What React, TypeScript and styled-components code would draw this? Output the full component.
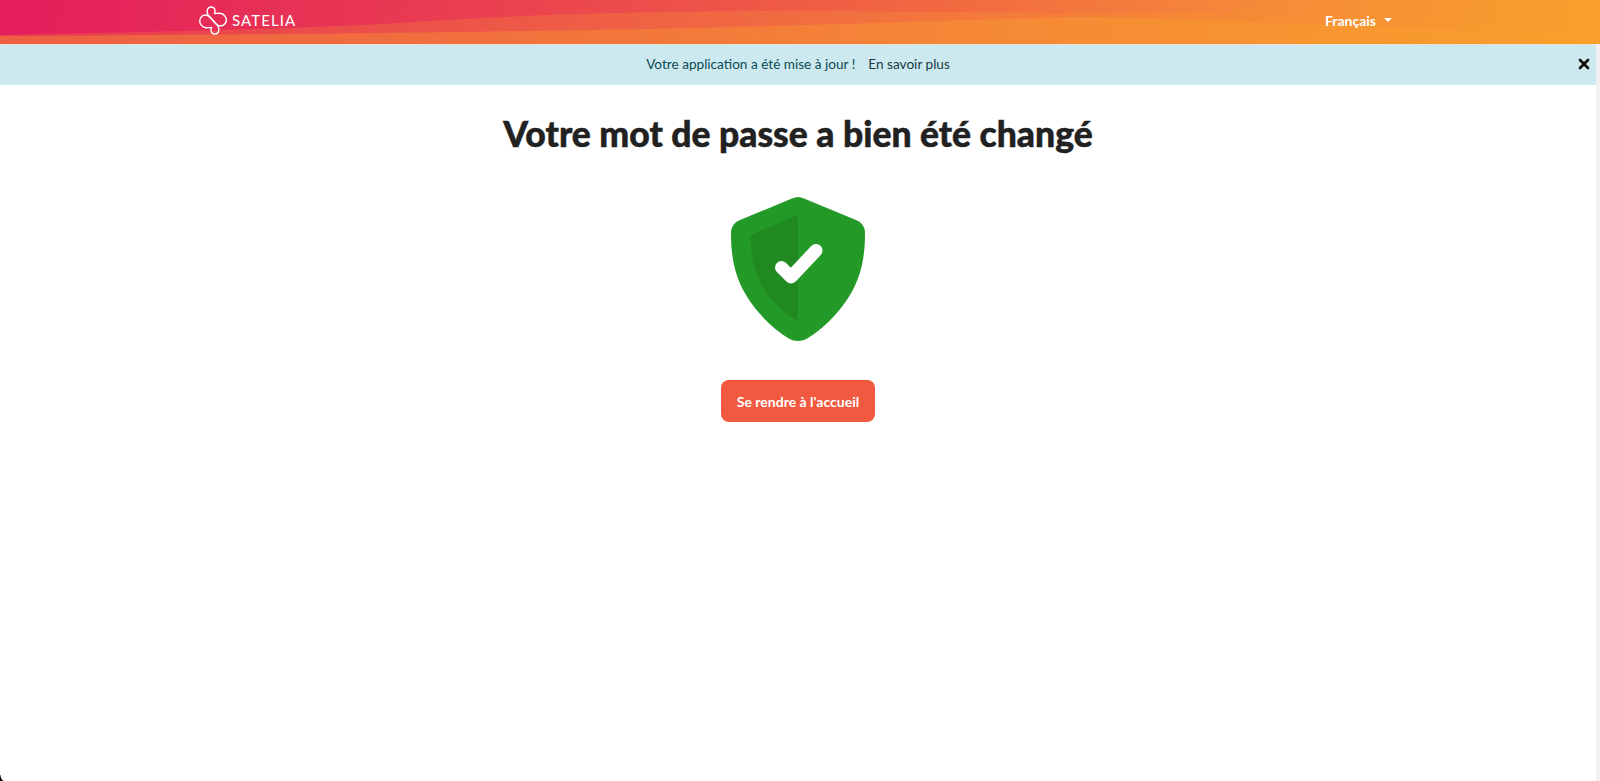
import React from "react";
import styled, {createGlobalStyle} from "styled-components";

const GlobalStyle = createGlobalStyle`
  html, body {
    margin: 0;
    padding: 0;
    height: 100%;
    background: white;
    overflow: hidden;
  }
  #root {
    height: 100%;
  }
`
const Page = styled.div`
  position: relative;
  height: 781px;
  display: flex;
  flex-direction: column;
  font-family: "Lato", "Open Sans", sans-serif;
  border-right: 4px solid #f1f1f1;
  box-sizing: border-box;
`
const Header = styled.header`
  position: relative;
  height: 44px;
  margin-right: -4px;
  flex-shrink: 0;
  display: flex;
  align-items: center;
  justify-content: space-between;
  padding: 0 208px 4px 199px;
  box-sizing: border-box;
  background: linear-gradient(96deg, #e41d5d 0%, #ea3f50 30%, #f26b40 60%, #f68c38 80%, #f9a02c 100%);
  overflow: hidden;
`
const Waves = styled.svg`
  position: absolute;
  inset: 0;
  width: 100%;
  height: 100%;
`
const Brand = styled.div`
  position: relative;
  display: flex;
  align-items: center;
  gap: 5px;
  color: white;
  font-size: 15px;
  letter-spacing: 1.1px;
`
const LangToggle = styled.div`
  position: relative;
  display: flex;
  align-items: center;
  gap: 8px;
  color: white;
  font-size: 14px;
  font-weight: 700;
`
const Caret = styled.span`
  width: 0;
  height: 0;
  border-top: 4px solid white;
  border-left: 4px solid transparent;
  border-right: 4px solid transparent;
`
const Banner = styled.div`
  position: relative;
  height: 41px;
  padding-bottom: 2px;
  box-sizing: border-box;
  border-top: 1px solid #e9e0d6;
  flex-shrink: 0;
  display: flex;
  align-items: center;
  justify-content: center;
  gap: 13px;
  background: #cce9ef;
  font-size: 13.6px;
  color: #0c4a55;
`
const BannerLink = styled.span`
  color: #1b3a44;
`
const Close = styled.span`
  position: absolute;
  right: 6px;
  top: 13px;
  display: flex;
`
const Main = styled.main`
  flex: 1;
  display: flex;
  flex-direction: column;
  align-items: center;
`
const Title = styled.h1`
  margin: 26px 0 0;
  font-size: 35.5px;
  line-height: 46px;
  font-weight: 900;
  color: #212121;
  -webkit-text-stroke: 0.5px #212121;
`
const ShieldIcon = styled.svg`
  display: block;
  margin-top: 40px;
`
const HomeButton = styled.button`
  margin-top: 39px;
  width: 154px;
  height: 42px;
  padding-bottom: 2px;
  border: none;
  border-top: 1px solid #ef4f26;
  border-radius: 8px;
  background: #f15a40;
  color: white;
  font-family: inherit;
  font-size: 14px;
  font-weight: 700;
  cursor: pointer;
`
const WindowCorner = styled.div`
  position: absolute;
  left: 0;
  bottom: 0;
  width: 8px;
  height: 6px;
  background: radial-gradient(circle at 100% 0, transparent 7px, black 8px);
`

const logoPath = "M9 9C7 5 8.500 1 12 1C15.500 1 17 4 15.500 7.500C18 7.500 20 7 22 7.500C25 8 27.300 11 27.300 14C27.300 17.500 24.500 20 21.500 20C19 20 17.500 18.500 16 17Z"

const Logo = () => (
    <svg width="28" height="29" viewBox="0 0 28 29" fill="none" stroke="white" strokeWidth="1.4" strokeLinejoin="round">
        <path d={logoPath}/>
        <path d={logoPath} transform="rotate(180 14 14.500)"/>
    </svg>
)

const App: React.FC = () => {
    return (
        <Page>
            <GlobalStyle/>
            <Header>
                <Waves viewBox="0 0 1600 44" preserveAspectRatio="none">
                    <defs>
                        <linearGradient id="waveA" x1="0" x2="1" y1="0" y2="0">
                            <stop offset="0" stopColor="#e9404f"/>
                            <stop offset="0.3" stopColor="#ee5c46"/>
                            <stop offset="0.6" stopColor="#f47b3b"/>
                            <stop offset="1" stopColor="#f99f2d"/>
                        </linearGradient>
                        <linearGradient id="waveB" x1="0" x2="1" y1="0" y2="0">
                            <stop offset="0" stopColor="#ee6341"/>
                            <stop offset="0.3" stopColor="#f2733c"/>
                            <stop offset="0.65" stopColor="#f68c34"/>
                            <stop offset="1" stopColor="#f9a02c"/>
                        </linearGradient>
                    </defs>
                    <path fill="url(#waveA)" opacity="0.8"
                          d="M0 35C150 32 300 29 400 23C500 16 600 12 760 11C900 10 1100 16 1200 12C1300 12 1420 22 1600 32V44H0Z"/>
                    <path fill="url(#waveB)" opacity="0.9"
                          d="M0 36C200 35 420 33 650 29C800 26 950 20 1090 17C1180 18 1320 27 1600 32V44H0Z"/>
                </Waves>
                <Brand><Logo/>SATELIA</Brand>
                <LangToggle>Français<Caret/></LangToggle>
            </Header>
            <Banner>
                <span>Votre application a été mise à jour !</span>
                <BannerLink>En savoir plus</BannerLink>
                <Close>
                    <svg width="12" height="12" viewBox="0 0 12 12" stroke="#111" strokeWidth="2.800" strokeLinecap="round">
                        <path d="M2 2l8 8M10 2l-8 8"/>
                    </svg>
                </Close>
            </Banner>
            <Main>
                <Title>Votre mot de passe a bien été changé</Title>
                <ShieldIcon width="134" height="144" viewBox="0 0 134 144">
                    <path fill="#239a27"
                          d="M61 1.500c4-2 8-2 12 0L125 23c6 2.500 9 7 9 13 0 22-3 42-15 62-12 20-29 35-42 43-6 4-14 4-20 0C44 133 27 118 15 98 3 78 0 58 0 36c0-6 3-10.500 9-13z"/>
                    <path fill="#208a20"
                          d="M67 18L19 38c1 17 3 31 9 45 8 18 22 32 39 41z"/>
                    <path fill="none" stroke="white" strokeWidth="13" strokeLinecap="round" strokeLinejoin="round"
                          d="M50.500 70.500L60 80L85 53.500"/>
                </ShieldIcon>
                <HomeButton>Se rendre à l'accueil</HomeButton>
            </Main>
            <WindowCorner/>
        </Page>
    )
}
export default App
